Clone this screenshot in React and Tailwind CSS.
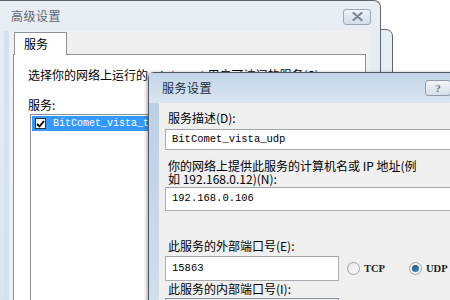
import React from "react";

const cjk = { fontFamily: '"Noto Sans CJK SC", "Noto Sans", sans-serif' };
const mono = { fontFamily: '"Liberation Mono", "DejaVu Sans Mono", "Noto Sans CJK SC", monospace' };

function TextBox({ children, className = "" }) {
  return (
    <div
      className={`h-[21px] border border-[#abadb3] border-t-[#a0a3aa] bg-white flex items-center pl-[6px] text-[10.5px] text-black ${className}`}
      style={mono}
    >
      {children}
    </div>
  );
}

function Radio({ checked, label }) {
  return (
    <div className="flex items-center gap-[4px]">
      <div className="w-[13px] h-[13px] rounded-full border border-[#9aa4ae] bg-gradient-to-br from-[#e6e9ec] to-[#fbfbfb] flex items-center justify-center">
        {checked && (
          <div className="w-[7px] h-[7px] rounded-full bg-gradient-to-br from-[#1d4f7a] to-[#4a8bc4]" />
        )}
      </div>
      <span className="text-[10.5px] font-bold text-[#222]" style={{ fontFamily: '"Liberation Serif", serif' }}>
        {label}
      </span>
    </div>
  );
}

export default function App() {
  return (
    <div className="relative w-[450px] h-[300px] overflow-hidden bg-white" style={cjk}>
      {/* third window sliver behind */}
      <div className="absolute left-[300px] top-[29px] w-[93px] h-[290px] rounded-tr-[7px] border border-[#5d6470] bg-gradient-to-r from-[#c7d3df] via-[#dfe7ef] to-[#e9eff5]" />

      {/* back window: 高级设置 */}
      <div className="absolute left-0 top-0 w-[381px] h-[320px] rounded-tr-[7px] border-r border-t border-[#5f6670] bg-gradient-to-b from-[#e9eef4] to-[#dbe4ee] flex flex-col">
        <div className="h-[30px] flex items-center justify-between pl-[11px] pr-[9px] shrink-0">
          <span className="text-[12px] text-[#5b6673] tracking-[0.5px]">高级设置</span>
          <div className="w-[28px] h-[16px] mt-[1px] rounded-[3px] border border-[#9aa7b6] bg-gradient-to-b from-[#eef2f6] to-[#d3dce6] flex items-center justify-center">
            <svg width="11" height="9" viewBox="0 0 11 9">
              <path d="M1.5 1 L9.5 8 M9.5 1 L1.5 8" stroke="#7a8594" strokeWidth="2.2" strokeLinecap="round" />
            </svg>
          </div>
        </div>
        <div className="flex-1 ml-[4px] mr-[10px] border-l-[5px] border-[#d3e2f1] bg-[#f0f0f0] pl-[4px] pr-[4px] flex flex-col">
          {/* tab strip */}
          <div className="h-[23px] flex items-end shrink-0 pt-[1px]">
            <div className="ml-[1px] w-[53px] h-[23px] bg-white border border-b-0 border-[#8e9299] flex items-center pl-[9px] text-[12px] text-black relative top-[1px]">
              服务
            </div>
          </div>
          <div className="flex-1 bg-white border border-[#8e9299] pl-[14px] pt-[12px]">
            <div className="text-[12px] text-black whitespace-nowrap leading-[15px]">
              选择你的网络上运行的、Internet 用户可访问的服务(S):
            </div>
            <div className="text-[12px] text-black leading-[15px] mt-[15px]">服务:</div>
            <div className="mt-[2px] ml-[2px] mr-[10px] h-[220px] border border-[#8a8e96] bg-white pt-[1px] px-[1px]">
              <div className="h-[15px] bg-[#3399ff] flex items-center pl-[3px] gap-[7px]">
                <div className="w-[11px] h-[11px] bg-white border border-[#333] flex items-center justify-center">
                  <svg width="9" height="8" viewBox="0 0 9 8">
                    <path d="M1 4 L3.5 6.5 L8 1" stroke="#000" strokeWidth="1.8" fill="none" />
                  </svg>
                </div>
                <span className="text-[10px] text-white whitespace-nowrap" style={mono}>
                  BitComet_vista_tcp
                </span>
              </div>
            </div>
          </div>
        </div>
      </div>

      {/* front window: 服务设置 */}
      <div className="absolute left-[148px] top-[72px] w-[330px] h-[260px] border border-[#4f5762] rounded-t-[6px] bg-gradient-to-b from-[#b9cde3] to-[#d3e1ef] flex flex-col shadow-[-2px_0_3px_rgba(0,0,0,0.25)]">
        <div className="h-[30px] flex items-center justify-between pl-[13px] shrink-0 bg-gradient-to-b from-[#c3d5e9] to-[#d9e5f1]">
          <span className="text-[12px] text-[#1e2b38] tracking-[0.5px]">服务设置</span>
          <div className="w-[26px] h-[16px] mr-[26px] rounded-[3px] border border-[#8d9bab] bg-gradient-to-b from-[#f2f5f8] to-[#d5dee8] flex items-center justify-center">
            <span className="text-[11px] font-bold text-[#6a7788] leading-none" style={{ fontFamily: '"Liberation Serif", serif' }}>?</span>
          </div>
        </div>
        <div className="flex-1 ml-[10px] bg-[#f0f0f0] pl-[6px] pt-[7px] flex flex-col">
          <div className="pl-[3px] text-[12px] text-black leading-[15px]">服务描述(D):</div>
          <TextBox className="mt-[4px] mr-[-2px]">BitComet_vista_udp</TextBox>
          <div className="mt-[9px] pl-[3px] text-[12px] text-black leading-[13px] whitespace-nowrap">
            你的网络上提供此服务的计算机名或 IP 地址(例
          </div>
          <div className="pl-[3px] text-[12px] text-black leading-[13px] whitespace-nowrap">
            如 192.168.0.12)(N):
          </div>
          <TextBox className="mt-[2px] h-[24px] mr-[-2px]">192.168.0.106</TextBox>
          <div className="mt-[27px] pl-[3px] text-[12px] text-black leading-[15px]">此服务的外部端口号(E):</div>
          <div className="mt-[3px] flex items-center">
            <TextBox className="w-[174px] h-[25px]">15863</TextBox>
            <div className="ml-[8px]">
              <Radio label="TCP" />
            </div>
            <div className="ml-[24px]">
              <Radio checked label="UDP" />
            </div>
          </div>
          <div className="pl-[3px] text-[12px] text-black leading-[15px]">此服务的内部端口号(I):</div>
          <div className="mt-[2px] w-[174px] h-[24px] border border-[#8e949c] bg-[#e8eaec]" />
        </div>
      </div>
    </div>
  );
}
